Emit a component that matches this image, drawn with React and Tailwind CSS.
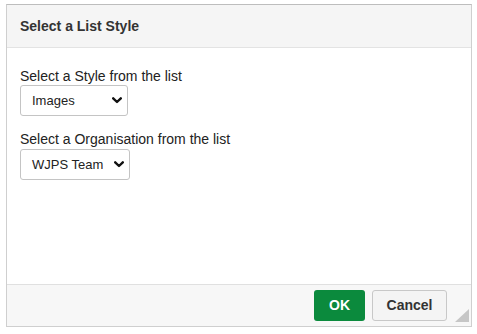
import React from 'react';

const Chevron = () => (
  <svg width="10" height="7" viewBox="0 0 10 7" className="shrink-0">
    <polyline points="1.2,1.3 5,5 8.8,1.3" fill="none" stroke="#111" strokeWidth="2.4" strokeLinecap="round" strokeLinejoin="round" />
  </svg>
);

const FakeSelect = ({ value, width }) => (
  <div
    className={`flex items-center justify-between h-[31px] ${width} pl-[11px] pr-[5px] border border-[#c4c4c4] rounded-[3px] bg-white text-[13px] text-[#222]`}
  >
    <span>{value}</span>
    <Chevron />
  </div>
);

export default function App() {
  return (
    <div className="w-[477px] h-[334px] bg-white pl-[6px] pt-[4px] font-['Liberation_Sans',Arial,sans-serif]">
      <div className="w-[466px] h-[323px] flex flex-col border border-[#cfcfcf] border-t-[#bdbdbd]">
        {/* Header */}
        <div className="h-[43px] shrink-0 flex items-center px-[13px] bg-[#f5f5f5] border-b border-[#e3e3e3]">
          <span className="text-[14px] font-bold text-[#333]">Select a List Style</span>
        </div>

        {/* Body */}
        <div className="flex-1 bg-white pt-[19px] px-[13px]">
          <div className="text-[14px] leading-[18px] text-[#222]">Select a Style from the list</div>
          <FakeSelect value="Images" width="w-[108px]" />

          <div className="mt-[14px] text-[14px] leading-[18px] text-[#222]">Select a Organisation from the list</div>
          <div className="mt-[1px]">
            <FakeSelect value="WJPS Team" width="w-[110px]" />
          </div>
        </div>

        {/* Footer */}
        <div className="h-[42px] shrink-0 flex items-start justify-end gap-[7px] pt-[5px] bg-[#f7f7f7] border-t border-[#e0e0e0]">
          <button className="h-[31px] w-[51px] rounded-[3px] bg-[#0b8a3d] text-white text-[14px] font-bold">
            OK
          </button>
          <button className="h-[31px] w-[75px] rounded-[3px] bg-[#f4f4f4] border border-[#c8c8c8] text-[#333] text-[14px] font-bold">
            Cancel
          </button>
          <div className="self-end mb-[4px] ml-[1px] mr-[2px]">
            <svg width="14" height="13" viewBox="0 0 14 13">
              <polygon points="14,0 14,13 0,13" fill="#c6c6c6" />
            </svg>
          </div>
        </div>
      </div>
    </div>
  );
}
